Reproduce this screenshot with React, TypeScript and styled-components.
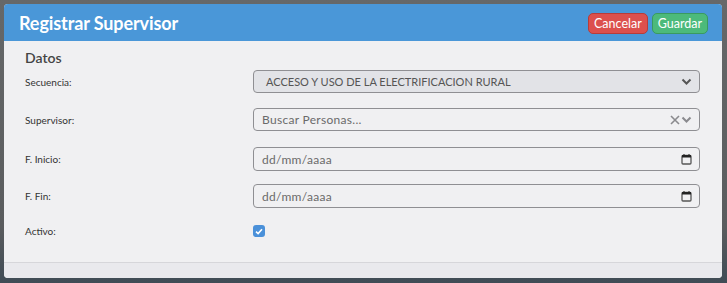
import React from 'react'
import styled, { createGlobalStyle } from 'styled-components'

const GlobalStyle = createGlobalStyle`
  html, body {
    margin: 0;
    padding: 0;
    background: #5d5f62;
    font-family: Lato, "Open Sans", sans-serif;
  }
`

const Backdrop = styled.div`
  width: 727px;
  height: 283px;
  padding: 4px 5px 5px 4px;
  box-sizing: border-box;
  background: linear-gradient(#666869, #5a5c5e 80%, #3f4b55);
`

const Modal = styled.div`
  height: 100%;
  display: flex;
  flex-direction: column;
  border-radius: 4px;
  overflow: hidden;
  background: #f0f0f2;
`

const Header = styled.div`
  height: 37px;
  flex: none;
  display: flex;
  align-items: center;
  justify-content: space-between;
  padding: 0 14px 0 15px;
  background: #4a97d8;
`

const Title = styled.h1`
  margin: 0;
  color: #fff;
  font-size: 18px;
  font-weight: 700;
  letter-spacing: -0.1px;
`

const Actions = styled.div`
  display: flex;
  gap: 4px;
  margin-top: 1px;
`

const Button = styled.button<{ $tone: 'danger' | 'success' }>`
  height: 21px;
  padding: 0 5px;
  border-radius: 5px;
  font-family: inherit;
  font-size: 12.5px;
  color: #fff;
  border: 1px solid ${(p) => (p.$tone === 'danger' ? '#b83c39' : '#3a9a60')};
  background: ${(p) => (p.$tone === 'danger' ? '#dc504d' : '#4cba7b')};
  cursor: pointer;
`

const Body = styled.div`
  flex: 1;
  padding: 8px 22px 0 21px;
`

const Section = styled.h2`
  margin: 0 0 4px;
  font-size: 14px;
  line-height: 17px;
  font-weight: 600;
  color: #444;
`

const Row = styled.div<{ $gap: number }>`
  display: grid;
  grid-template-columns: 228px 1fr;
  align-items: center;
  margin-top: ${(p) => p.$gap}px;
`

const Label = styled.label`
  font-size: 10px;
  line-height: 12px;
  color: #333;
`

const Field = styled.div<{ $filled?: boolean; $tall?: boolean }>`
  height: ${(p) => (p.$tall ? 24 : 23)}px;
  box-sizing: border-box;
  display: flex;
  align-items: center;
  border: 1px solid #8f8f93;
  border-radius: 4px;
  background: ${(p) => (p.$filled ? '#e2e3e7' : '#f0f0f2')};
  color: #666;
  font-size: 12px;
  padding: 0 7px 0 8px;
`

const FieldText = styled.span<{ $dark?: boolean }>`
  flex: 1;
  color: ${(p) => (p.$dark ? '#555' : '#6a6a6a')};
  padding-left: ${(p) => (p.$dark ? 4 : 0)}px;
  font-size: ${(p) => (p.$dark ? 11 : 12)}px;
  letter-spacing: ${(p) => (p.$dark ? 0 : 0.3)}px;
`

const IconBox = styled.span`
  display: flex;
  align-items: center;
  gap: 1px;
  color: #8a8a8e;
`

const Check = styled.span`
  width: 12px;
  height: 12px;
  border-radius: 3px;
  background: #4a90d9;
  display: flex;
  align-items: center;
  justify-content: center;
`

const Footer = styled.div`
  height: 15px;
  flex: none;
  border-top: 1px solid #d6d6da;
  background: #e9e9ed;
`

const Chevron = ({ color = '#555' }: { color?: string }) => (
  <svg width='11' height='8' viewBox='0 0 11 8'>
    <path d='M1.5 1.5 L5.5 5.5 L9.5 1.5' fill='none' stroke={color} strokeWidth='2' />
  </svg>
)

const Cross = () => (
  <svg width='10' height='10' viewBox='0 0 10 10'>
    <path d='M1 1 L9 9 M9 1 L1 9' fill='none' stroke='#8a8a8e' strokeWidth='1.6' />
  </svg>
)

const Calendar = () => (
  <svg width='11' height='11' viewBox='0 0 11 11'>
    <rect x='1' y='1.5' width='9' height='8.5' rx='1' fill='none' stroke='#555' strokeWidth='1.3' />
    <rect x='1' y='1' width='9' height='2.5' fill='#222' />
    <path d='M3 0 V2 M8 0 V2' stroke='#222' strokeWidth='1' />
  </svg>
)

const Tick = () => (
  <svg width='8' height='7' viewBox='0 0 8 7'>
    <path d='M1 3.6 L3.1 5.6 L7 1.2' fill='none' stroke='#fff' strokeWidth='1.6' />
  </svg>
)

export default function App(): JSX.Element {
  return (
    <>
      <GlobalStyle />
      <Backdrop>
        <Modal>
          <Header>
            <Title>Registrar Supervisor</Title>
            <Actions>
              <Button $tone='danger'>Cancelar</Button>
              <Button $tone='success'>Guardar</Button>
            </Actions>
          </Header>
          <Body>
            <Section>Datos</Section>
            <Row $gap={0}>
              <Label>Secuencia:</Label>
              <Field $filled>
                <FieldText $dark>ACCESO Y USO DE LA ELECTRIFICACION RURAL</FieldText>
                <IconBox><Chevron /></IconBox>
              </Field>
            </Row>
            <Row $gap={15}>
              <Label>Supervisor:</Label>
              <Field>
                <FieldText>Buscar Personas...</FieldText>
                <IconBox><Cross /><Chevron color='#8a8a8e' /></IconBox>
              </Field>
            </Row>
            <Row $gap={16}>
              <Label>F. Inicio:</Label>
              <Field $tall>
                <FieldText>dd/mm/aaaa</FieldText>
                <IconBox><Calendar /></IconBox>
              </Field>
            </Row>
            <Row $gap={13}>
              <Label>F. Fin:</Label>
              <Field $tall>
                <FieldText>dd/mm/aaaa</FieldText>
                <IconBox><Calendar /></IconBox>
              </Field>
            </Row>
            <Row $gap={17}>
              <Label>Activo:</Label>
              <Check><Tick /></Check>
            </Row>
          </Body>
          <Footer />
        </Modal>
      </Backdrop>
    </>
  )
}
